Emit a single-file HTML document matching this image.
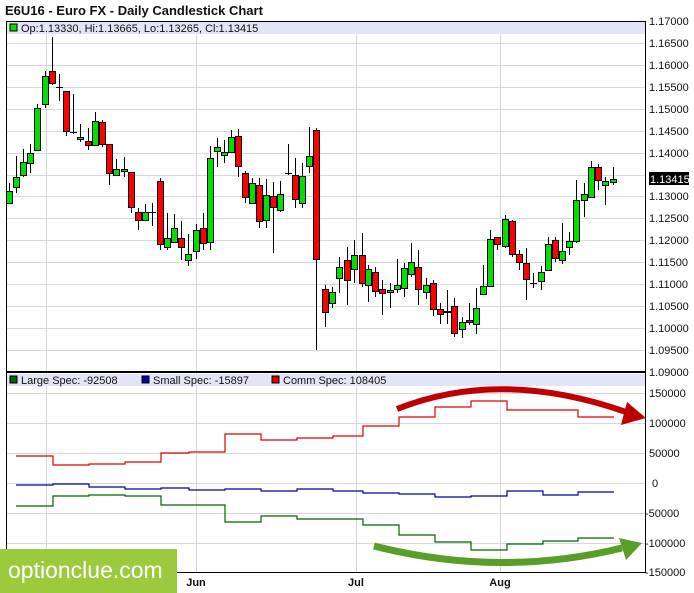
<!DOCTYPE html>
<html><head><meta charset="utf-8"><style>
html,body{margin:0;padding:0;background:#fff;}
svg{display:block;font-family:"Liberation Sans",sans-serif;}
</style></head><body>
<svg width="694" height="593" viewBox="0 0 694 593" xmlns="http://www.w3.org/2000/svg">
<rect width="694" height="593" fill="#fff"/>
<text x="5" y="15" font-size="13" font-weight="bold" fill="#111">E6U16 - Euro FX - Daily Candlestick Chart</text>
<!-- price grid -->
<g stroke="#d8d8d8" stroke-width="1">
<line x1="6" x2="645" y1="43.5" y2="43.5"/><line x1="6" x2="645" y1="65.5" y2="65.5"/><line x1="6" x2="645" y1="87.5" y2="87.5"/><line x1="6" x2="645" y1="109.5" y2="109.5"/><line x1="6" x2="645" y1="131.5" y2="131.5"/><line x1="6" x2="645" y1="153.5" y2="153.5"/><line x1="6" x2="645" y1="175.5" y2="175.5"/><line x1="6" x2="645" y1="196.5" y2="196.5"/><line x1="6" x2="645" y1="218.5" y2="218.5"/><line x1="6" x2="645" y1="240.5" y2="240.5"/><line x1="6" x2="645" y1="262.5" y2="262.5"/><line x1="6" x2="645" y1="284.5" y2="284.5"/><line x1="6" x2="645" y1="306.5" y2="306.5"/><line x1="6" x2="645" y1="328.5" y2="328.5"/><line x1="6" x2="645" y1="350.5" y2="350.5"/>
<line x1="46.5" x2="46.5" y1="22" y2="572"/><line x1="196.5" x2="196.5" y1="22" y2="572"/><line x1="356.5" x2="356.5" y1="22" y2="572"/><line x1="500.5" x2="500.5" y1="22" y2="572"/>
<line x1="6" x2="645" y1="393.5" y2="393.5"/><line x1="6" x2="645" y1="423.5" y2="423.5"/><line x1="6" x2="645" y1="453.5" y2="453.5"/><line x1="6" x2="645" y1="483.5" y2="483.5"/><line x1="6" x2="645" y1="513.5" y2="513.5"/><line x1="6" x2="645" y1="543.5" y2="543.5"/>
</g>
<rect x="7" y="22" width="638" height="12" fill="#e4e4f8"/>
<rect x="10" y="24" width="7" height="7" fill="#00e000" stroke="#000" stroke-width="1"/>
<text x="21" y="32" font-size="11" fill="#111">Op:1.13330, Hi:1.13665, Lo:1.13265, Cl:1.13415</text>
<!-- candles -->
<g stroke="#000" stroke-width="1">
<g id="w">
<line x1="9.5" x2="9.5" y1="183" y2="203"/><line x1="16.5" x2="16.5" y1="156" y2="193"/><line x1="23.5" x2="23.5" y1="149" y2="177"/><line x1="30.5" x2="30.5" y1="144" y2="173"/><line x1="37.5" x2="37.5" y1="104" y2="150"/><line x1="45.5" x2="45.5" y1="71" y2="108"/><line x1="52.5" x2="52.5" y1="37" y2="85"/><line x1="59.5" x2="59.5" y1="74" y2="101"/><line x1="66.5" x2="66.5" y1="91" y2="136"/><line x1="73.5" x2="73.5" y1="94" y2="134"/><line x1="80.5" x2="80.5" y1="124" y2="142"/><line x1="88.5" x2="88.5" y1="128" y2="150"/><line x1="95.5" x2="95.5" y1="112" y2="145"/><line x1="102.5" x2="102.5" y1="120" y2="147"/><line x1="109.5" x2="109.5" y1="144" y2="185"/><line x1="116.5" x2="116.5" y1="159" y2="175"/><line x1="124.5" x2="124.5" y1="157" y2="177"/><line x1="131.5" x2="131.5" y1="172" y2="213"/><line x1="138.5" x2="138.5" y1="208" y2="230"/><line x1="145.5" x2="145.5" y1="204" y2="220"/><line x1="152.5" x2="152.5" y1="203" y2="226"/><line x1="160.5" x2="160.5" y1="178" y2="250"/><line x1="167.5" x2="167.5" y1="213" y2="250"/><line x1="174.5" x2="174.5" y1="214" y2="242"/><line x1="181.5" x2="181.5" y1="221" y2="260"/><line x1="188.5" x2="188.5" y1="234" y2="266"/><line x1="196.5" x2="196.5" y1="224" y2="259"/><line x1="203.5" x2="203.5" y1="213" y2="250"/><line x1="210.5" x2="210.5" y1="146" y2="250"/><line x1="217.5" x2="217.5" y1="138" y2="167"/><line x1="224.5" x2="224.5" y1="140" y2="163"/><line x1="231.5" x2="231.5" y1="130" y2="152"/><line x1="238.5" x2="238.5" y1="129" y2="177"/><line x1="245.5" x2="245.5" y1="171" y2="203"/><line x1="252.5" x2="252.5" y1="178" y2="204"/><line x1="259.5" x2="259.5" y1="178" y2="228"/><line x1="266.5" x2="266.5" y1="179" y2="228"/><line x1="273.5" x2="273.5" y1="182" y2="253"/><line x1="280.5" x2="280.5" y1="181" y2="212"/><line x1="288.5" x2="288.5" y1="144" y2="175"/><line x1="295.5" x2="295.5" y1="158" y2="208"/><line x1="302.5" x2="302.5" y1="163" y2="208"/><line x1="309.5" x2="309.5" y1="127" y2="173"/><line x1="316.5" x2="316.5" y1="128" y2="350"/>
<line x1="325.5" x2="325.5" y1="285" y2="327"/><line x1="332.5" x2="332.5" y1="287" y2="308"/><line x1="339.5" x2="339.5" y1="257" y2="293"/><line x1="347.5" x2="347.5" y1="247" y2="305"/><line x1="354.5" x2="354.5" y1="240" y2="283"/><line x1="362.5" x2="362.5" y1="233" y2="287"/><line x1="368.5" x2="368.5" y1="265" y2="302"/><line x1="375.5" x2="375.5" y1="267" y2="297"/><line x1="382.5" x2="382.5" y1="280" y2="315"/><line x1="390.5" x2="390.5" y1="283" y2="308"/><line x1="397.5" x2="397.5" y1="259" y2="293"/><line x1="404.5" x2="404.5" y1="263" y2="297"/><line x1="411.5" x2="411.5" y1="243" y2="277"/><line x1="418.5" x2="418.5" y1="250" y2="305"/><line x1="426.5" x2="426.5" y1="278" y2="299"/><line x1="433.5" x2="433.5" y1="280" y2="316"/><line x1="440.5" x2="440.5" y1="303" y2="324"/><line x1="447.5" x2="447.5" y1="290" y2="324"/><line x1="454.5" x2="454.5" y1="298" y2="337"/><line x1="462.5" x2="462.5" y1="317" y2="338"/><line x1="469.5" x2="469.5" y1="303" y2="325"/><line x1="476.5" x2="476.5" y1="288" y2="334"/><line x1="483.5" x2="483.5" y1="265" y2="294"/><line x1="490.5" x2="490.5" y1="230" y2="287"/><line x1="497.5" x2="497.5" y1="237" y2="250"/><line x1="505.5" x2="505.5" y1="215" y2="248"/><line x1="512.5" x2="512.5" y1="220" y2="257"/><line x1="519.5" x2="519.5" y1="250" y2="270"/><line x1="526.5" x2="526.5" y1="248" y2="300"/><line x1="533.5" x2="533.5" y1="273" y2="288"/><line x1="541.5" x2="541.5" y1="266" y2="290"/><line x1="548.5" x2="548.5" y1="237" y2="270"/><line x1="555.5" x2="555.5" y1="237" y2="262"/><line x1="562.5" x2="562.5" y1="223" y2="264"/><line x1="569.5" x2="569.5" y1="232" y2="255"/><line x1="576.5" x2="576.5" y1="180" y2="243"/><line x1="584.5" x2="584.5" y1="183" y2="217"/><line x1="591.5" x2="591.5" y1="161" y2="197"/><line x1="598.5" x2="598.5" y1="164" y2="190"/><line x1="605.5" x2="605.5" y1="177" y2="205"/><line x1="613.5" x2="613.5" y1="167" y2="185"/>
</g>
<g fill="#00e000">
<rect x="6.5" y="191.5" width="6" height="12"/><rect x="13.5" y="177.5" width="6" height="10"/><rect x="20.5" y="162.5" width="6" height="13"/><rect x="27.5" y="153.5" width="6" height="10"/><rect x="34.5" y="108.5" width="6" height="42"/><rect x="42.5" y="76.5" width="6" height="28"/><rect x="77.5" y="137.5" width="6" height="2"/><rect x="92.5" y="121.5" width="6" height="24"/><rect x="113.5" y="169.5" width="6" height="6"/><rect x="121.5" y="169.5" width="6" height="2"/><rect x="142.5" y="212.5" width="6" height="8"/><rect x="164.5" y="238.5" width="6" height="9"/><rect x="171.5" y="228.5" width="6" height="14"/><rect x="185.5" y="254.5" width="6" height="6"/><rect x="193.5" y="230.5" width="6" height="21"/><rect x="207.5" y="158.5" width="6" height="84"/><rect x="214.5" y="147.5" width="6" height="4"/><rect x="221.5" y="152.5" width="6" height="3"/><rect x="228.5" y="137.5" width="6" height="15"/><rect x="249.5" y="183.5" width="6" height="20"/><rect x="263.5" y="195.5" width="6" height="25"/><rect x="277.5" y="194.5" width="6" height="16"/><rect x="299.5" y="176.5" width="6" height="27"/><rect x="306.5" y="156.5" width="6" height="10"/>
<rect x="329.5" y="292.5" width="6" height="11"/><rect x="336.5" y="267.5" width="6" height="11"/><rect x="351.5" y="255.5" width="6" height="14"/><rect x="365.5" y="269.5" width="6" height="16"/><rect x="387.5" y="290.5" width="6" height="2"/><rect x="394.5" y="285.5" width="6" height="4"/><rect x="401.5" y="268.5" width="6" height="20"/><rect x="408.5" y="262.5" width="6" height="12"/><rect x="423.5" y="285.5" width="6" height="7"/><rect x="444.5" y="311.5" width="6" height="1"/><rect x="459.5" y="322.5" width="6" height="7"/><rect x="473.5" y="308.5" width="6" height="16"/><rect x="480.5" y="286.5" width="6" height="8"/><rect x="487.5" y="239.5" width="6" height="47"/><rect x="502.5" y="219.5" width="6" height="27"/><rect x="538.5" y="272.5" width="6" height="9"/><rect x="545.5" y="244.5" width="6" height="26"/><rect x="559.5" y="251.5" width="6" height="9"/><rect x="566.5" y="241.5" width="6" height="6"/><rect x="573.5" y="200.5" width="6" height="41"/><rect x="581.5" y="194.5" width="6" height="6"/><rect x="588.5" y="167.5" width="6" height="30"/><rect x="602.5" y="181.5" width="6" height="4"/><rect x="610.5" y="179.5" width="6" height="3"/>
</g>
<g fill="#ff0000">
<rect x="49.5" y="71.5" width="6" height="12"/><rect x="63.5" y="91.5" width="6" height="40"/><rect x="85.5" y="141.5" width="6" height="4"/><rect x="99.5" y="122.5" width="6" height="22"/><rect x="106.5" y="144.5" width="6" height="29"/><rect x="128.5" y="172.5" width="6" height="35"/><rect x="135.5" y="212.5" width="6" height="8"/><rect x="157.5" y="181.5" width="6" height="63"/><rect x="178.5" y="238.5" width="6" height="9"/><rect x="200.5" y="228.5" width="6" height="15"/><rect x="235.5" y="136.5" width="6" height="30"/><rect x="242.5" y="173.5" width="6" height="24"/><rect x="256.5" y="185.5" width="6" height="36"/><rect x="270.5" y="196.5" width="6" height="11"/><rect x="292.5" y="175.5" width="6" height="24"/><rect x="313.5" y="130.5" width="6" height="129"/>
<rect x="322.5" y="289.5" width="6" height="23"/><rect x="344.5" y="260.5" width="6" height="20"/><rect x="359.5" y="255.5" width="6" height="28"/><rect x="372.5" y="272.5" width="6" height="19"/><rect x="379.5" y="289.5" width="6" height="4"/><rect x="415.5" y="267.5" width="6" height="22"/><rect x="430.5" y="283.5" width="6" height="26"/><rect x="437.5" y="309.5" width="6" height="5"/><rect x="451.5" y="306.5" width="6" height="27"/><rect x="466.5" y="320.5" width="6" height="2"/><rect x="494.5" y="237.5" width="6" height="7"/><rect x="509.5" y="221.5" width="6" height="33"/><rect x="516.5" y="254.5" width="6" height="8"/><rect x="523.5" y="263.5" width="6" height="16"/><rect x="552.5" y="240.5" width="6" height="18"/><rect x="595.5" y="167.5" width="6" height="13"/>
</g>
<line x1="56" x2="63" y1="87.5" y2="87.5"/><line x1="70" x2="77" y1="132.5" y2="132.5"/><line x1="149" x2="156" y1="212.5" y2="212.5"/><line x1="285" x2="292" y1="173.5" y2="173.5"/><line x1="530" x2="537" y1="283.5" y2="283.5"/>
</g>
<!-- COT legend -->
<rect x="7" y="374" width="638" height="12" fill="#e4e4f8"/>
<rect x="10" y="376" width="7" height="7" fill="#006400" stroke="#000"/>
<text x="21" y="384" font-size="11" fill="#111">Large Spec: -92508</text>
<rect x="142" y="376" width="7" height="7" fill="#0000b0" stroke="#000"/>
<text x="153" y="384" font-size="11" fill="#111">Small Spec: -15897</text>
<rect x="272" y="376" width="7" height="7" fill="#e00000" stroke="#000"/>
<text x="283" y="384" font-size="11" fill="#111">Comm Spec: 108405</text>
<!-- COT lines -->
<g fill="none" stroke-width="1.2">
<polyline stroke="#e00000" points="16,456 53,456 53,465 89,465 89,464 125,464 125,462 161,462 161,453 189,453 189,452 225,452 225,434 261,434 261,440 297,440 297,438 333,438 333,436 363,436 363,426 399,426 399,417 435,417 435,407 471,407 471,401 507,401 507,410 578,410 578,417 614,417"/>
<polyline stroke="#0000a0" points="16,485 53,485 53,484 89,484 89,487 125,487 125,489 161,489 161,488 189,488 189,490 225,490 225,489 261,489 261,491 297,491 297,489 333,489 333,491 363,491 363,493 399,493 399,494 435,494 435,497 471,497 471,496 507,496 507,491 543,491 543,495 578,495 578,492 614,492"/>
<polyline stroke="#006400" points="16,506 53,506 53,496 89,496 89,495 125,495 125,496 161,496 161,505 225,505 225,522 261,522 261,516 297,516 297,519 363,519 363,525 399,525 399,535 435,535 435,542 471,542 471,550 507,550 507,544 543,544 543,541 578,541 578,538 614,538"/>
</g>
<!-- arrows -->
<path d="M397,409 Q500,368 626,412" fill="none" stroke="#c00000" stroke-width="6"/>
<polygon points="627,402 646,418 621,425" fill="#c00000"/>
<path d="M374,546 Q500,578 622,548" fill="none" stroke="#5a9e2a" stroke-width="7"/>
<polygon points="619,538 642,543 626,560" fill="#5a9e2a"/>
<!-- frame -->
<g stroke="#000" fill="none">
<line x1="6.5" x2="6.5" y1="21" y2="572"/>
<line x1="645.5" x2="645.5" y1="21" y2="572"/>
<line x1="6" x2="646" y1="21.5" y2="21.5"/>
<line x1="6" x2="646" y1="372" y2="372" stroke-width="2"/>
<line x1="6" x2="646" y1="572.5" y2="572.5"/>
</g>
<g font-size="11" fill="#111">
<text x="649" y="25">1.17000</text><text x="649" y="47">1.16500</text><text x="649" y="69">1.16000</text><text x="649" y="91">1.15500</text><text x="649" y="113">1.15000</text><text x="649" y="135">1.14500</text><text x="649" y="157">1.14000</text><text x="649" y="200">1.13000</text><text x="649" y="222">1.12500</text><text x="649" y="244">1.12000</text><text x="649" y="266">1.11500</text><text x="649" y="288">1.11000</text><text x="649" y="310">1.10500</text><text x="649" y="332">1.10000</text><text x="649" y="354">1.09500</text><text x="649" y="376">1.09000</text>
<text x="649" y="397">150000</text><text x="649" y="427">100000</text><text x="649" y="457">50000</text><text x="652" y="487">0</text><text x="645" y="517">-50000</text><text x="645" y="547">-100000</text><text x="645" y="576">-150000</text>
</g>
<rect x="649" y="172" width="40" height="13" fill="#000"/>
<text x="650" y="183" font-size="11" fill="#fff">1.13415</text>
<g font-size="11" font-weight="bold" fill="#111" text-anchor="middle">
<text x="196" y="586">Jun</text><text x="356" y="586">Jul</text><text x="500" y="586">Aug</text>
</g>
<rect x="0" y="549" width="177" height="44" fill="#9bcb3c"/>
<text x="8" y="578" font-size="23" fill="#fff">optionclue.com</text>
</svg>
</body></html>
